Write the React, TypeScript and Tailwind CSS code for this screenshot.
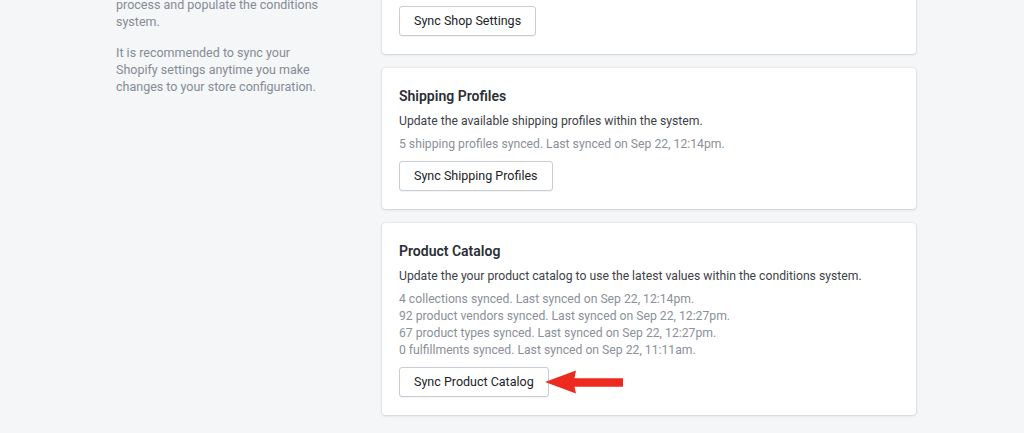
import React from 'react'

interface SyncCardProps {
	title: string
	description: string
	status: string[]
	button: string
	arrow?: boolean
}

const SyncCard: React.FC<SyncCardProps> = ({ title, description, status, button, arrow }) => {
	return (
		<div className="bg-white rounded-[4px] shadow-[0_0_0_1px_rgba(63,63,68,0.05),0_1px_3px_0_rgba(63,63,68,0.15)] px-[17px] pt-[17px] pb-[18px]">
			<h2 className="text-[14px] leading-[22px] font-semibold text-[#2b2f36]">{title}</h2>
			<p className="mt-[5.5px] text-[12.2px] leading-[17px] text-[#3d4148]">{description}</p>
			<div className="mt-[6px] text-[12.2px] leading-[17px] text-[#8b9099]">
				{status.map((line) => (
					<p key={line}>{line}</p>
				))}
			</div>
			<div className="mt-[8.5px] flex items-center">
				<button className="h-[30px] px-[14px] bg-white border border-[#c9ccd1] rounded-[3px] shadow-[0_1px_0_rgba(22,29,37,0.05)] text-[12.5px] text-[#212326]">
					{button}
				</button>
				{arrow && (
					<svg
						className="-ml-[4px]"
						width="78"
						height="24"
						viewBox="0 0 78 24"
						fill="#ec2a1f"
					>
						<polygon points="0,12 31,0.5 29.5,8.3 78,8.3 78,16.7 29.5,16.7 31,23.5" />
					</svg>
				)}
			</div>
		</div>
	)
}

export default function App() {
	return (
		<div
			className="h-[433px] overflow-hidden bg-[#f4f6f8]"
			style={{ fontFamily: 'Roboto, "Noto Sans", sans-serif' }}
		>
			<div className="flex pl-[116px] -mt-[87px]">
				<div className="w-[222px] shrink-0 whitespace-nowrap text-[12.5px] leading-[17px] text-[#868b94]">
					<h3 className="text-[14px] leading-[24px] font-semibold text-[#2b2f36]">Sync Shopify Data</h3>
					<p className="mt-[7.5px]">
						Syncing pulls your shop settings,
						<br />
						shipping profiles and product
						<br />
						catalog from Shopify in order to
						<br />
						process and populate the conditions
						<br />
						system.
					</p>
					<p className="mt-[14px]">
						It is recommended to sync your
						<br />
						Shopify settings anytime you make
						<br />
						changes to your store configuration.
					</p>
				</div>
				<div className="ml-[44px] w-[534px] flex flex-col gap-[14px]">
					<SyncCard
						title="Shop Settings"
						description="Update the shop settings such as currency and timezone within the system."
						status={['Shop settings synced. Last synced on Sep 22, 12:14pm.']}
						button="Sync Shop Settings"
					/>
					<SyncCard
						title="Shipping Profiles"
						description="Update the available shipping profiles within the system."
						status={['5 shipping profiles synced. Last synced on Sep 22, 12:14pm.']}
						button="Sync Shipping Profiles"
					/>
					<SyncCard
						title="Product Catalog"
						description="Update the your product catalog to use the latest values within the conditions system."
						status={[
							'4 collections synced. Last synced on Sep 22, 12:14pm.',
							'92 product vendors synced. Last synced on Sep 22, 12:27pm.',
							'67 product types synced. Last synced on Sep 22, 12:27pm.',
							'0 fulfillments synced. Last synced on Sep 22, 11:11am.',
						]}
						button="Sync Product Catalog"
						arrow
					/>
				</div>
			</div>
		</div>
	)
}
